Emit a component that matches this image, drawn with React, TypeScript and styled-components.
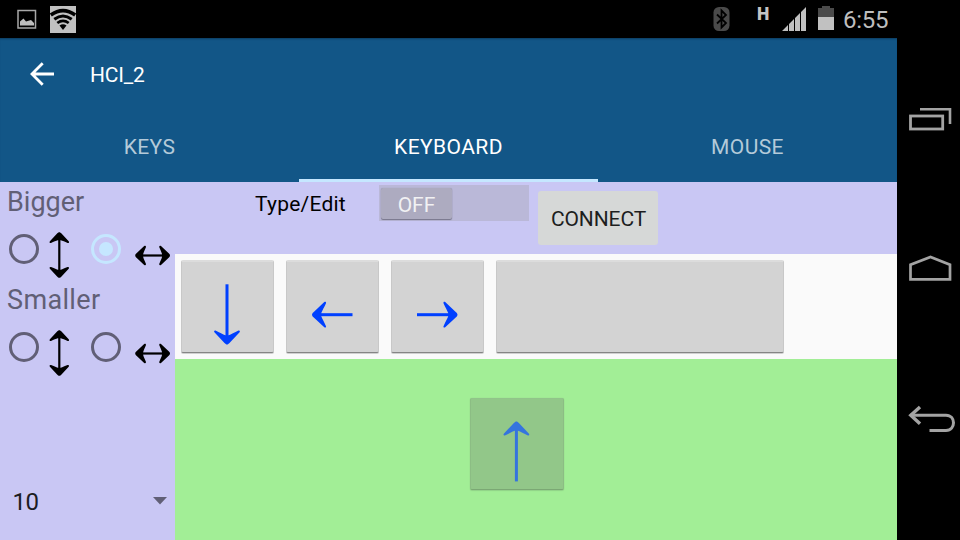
import React from 'react';
import styled, { createGlobalStyle, css } from 'styled-components';

const Global = createGlobalStyle`
  * { box-sizing: border-box; }
  body { margin: 0; background: #000; font-family: Roboto, sans-serif; }
  svg { display: block; flex: none; overflow: visible; }
  button { font: inherit; border: 0; padding: 0; margin: 0; }
`;

const Screen = styled.div`
  width: 960px; height: 540px; overflow: hidden;
  display: grid; grid-template: 38px 502px / 897px 63px;
  background: #000;
`;
const StatusBar = styled.header`
  grid-column: 1 / 3; display: flex; justify-content: space-between;
  padding: 0 71px 0 17px; color: #bebebe;
`;
const StatusGroup = styled.div`display: flex; align-items: flex-start;`;
const NetworkType = styled.span`
  width: 14px; margin: 6px 11px 0 27px; font-size: 17.5px; line-height: 16px; font-weight: 900; color: #c4c4c4;
`;
const Clock = styled.time`
  width: 46px; margin-left: 9px; font-size: 24px; line-height: 38px; height: 38px; padding-top: 1px; white-space: nowrap;
  letter-spacing: -0.3px;
`;
const StatusIcon = styled.svg<{ $top: number; $left?: number }>`
  margin-top: ${p => p.$top}px; margin-left: ${p => p.$left ?? 0}px;
`;

const AppWindow = styled.main`display: flex; flex-direction: column; background: #fafafa;`;
const AppBar = styled.div`
  height: 144px; flex: none; background: #125687; color: #fff;
  box-shadow: inset 0 2px 2px -1px #0d3e62;
`;
const Toolbar = styled.div`height: 72px; display: flex; align-items: center; padding-left: 30px;`;
const Title = styled.h1`
  margin: 1px 0 0 36px; font-size: 21px; line-height: 28px; font-weight: 400; letter-spacing: -0.2px;
`;
const Tabs = styled.nav`display: grid; grid-template-columns: repeat(3, 299px); height: 72px;`;
const Tab = styled.a<{ $active?: boolean }>`
  text-align: center; font-size: 21px; line-height: 75px; height: 72px; letter-spacing: 0.42px;
  color: ${p => (p.$active ? '#fff' : '#b4cad9')};
  border-bottom: 3px solid ${p => (p.$active ? '#c5e7ff' : 'transparent')};
`;

const Content = styled.div`flex: 1; display: grid; grid-template-columns: 175px 722px;`;
const Sidebar = styled.aside`background: #c9c7f4; display: flex; flex-direction: column;`;
const SizeGroup = styled.section`height: 98px;`;
const GroupTitle = styled.h2<{ $tracking: number }>`
  margin: 0; padding: 4px 0 0 7px; height: 50px; font-size: 27px; line-height: 32px; font-weight: 400; color: #615f76;
  letter-spacing: ${p => p.$tracking}px;
`;
const RadioRow = styled.div`display: flex; align-items: flex-start; padding-left: 9px;`;
const Radio = styled.span<{ $checked?: boolean; $gap?: number }>`
  width: 30px; height: 30px; flex: none; margin: 2px 0 0 ${p => p.$gap ?? 0}px; border-radius: 50%;
  border: 3px solid ${p => (p.$checked ? '#c5e7ff' : '#615f76')};
  display: grid; place-items: center;
  ${p => p.$checked && css`&::after { content: ''; width: 14px; height: 14px; border-radius: 50%; background: #c5e7ff; }`}
`;
const Spinner = styled.div`
  margin-top: auto; height: 78px; padding: 2px 8px 0 12.5px; display: flex; align-items: center;
  justify-content: space-between; font-size: 24px; letter-spacing: -0.4px; color: #1c1c22;
`;
const Caret = styled.svg`margin-top: -2px;`;

const Workspace = styled.div`display: grid; grid-template-rows: 72px 105px 181px;`;
const Controls = styled.div`background: #c9c7f4; display: flex; align-items: flex-start; padding-left: 80px;`;
const ToggleLabel = styled.span`width: 124px; font-size: 21px; line-height: 45px; letter-spacing: 0.22px; color: #000;`;
const Toggle = styled.button`width: 150px; height: 36px; margin-top: 3px; background: #bab8d8; padding: 3px 2px; display: flex;`;
const Thumb = styled.span`
  width: 71px; height: 31px; border-radius: 2px; background: #adabc0; color: #f1f1f3;
  font-size: 21px; line-height: 35px; text-align: center;
  box-shadow: 0 1px 1px #77758a, 0 0 1px #8f8da4;
`;
const Connect = styled.button`
  width: 120px; height: 54px; margin: 9px 0 0 9px; border-radius: 3px; background: #d6d8d7;
  font-size: 21px; line-height: 56px; letter-spacing: -0.1px; padding-left: 1px; color: #1d1e1e;
`;
const KeyRow = styled.div`background: #fafafa; display: flex; gap: 12px; padding: 6px;`;
const Canvas = styled.div`background: #a2ee96; padding: 38px 0 0 295px;`;
const Key = styled.button<{ $width?: number; $ghost?: boolean }>`
  display: block; width: ${p => p.$width ?? 93}px; height: 93px; border-radius: 2px;
  background: #d3d3d3; border: 1px solid #c8c8c8; border-top: 2px solid #dcdcdc; border-bottom: 1px solid #858585;
  box-shadow: 0 1px 0 #d0d0d0;
  ${p => p.$ghost && css`
    height: 92px; width: 94px;
    background: #92c789; border-color: #8cbd84; border-top-color: #91c48a; border-bottom-color: #7ba874;
    border-top-width: 1px; margin-top: 1px; box-shadow: 0 1px 1px #91d388, 0 0 1px #8cc482;
  `}
`;
const NavBar = styled.nav`display: flex; flex-direction: column; align-items: flex-start; padding: 69px 0 0 11px;`;
const NavIcon = styled.svg<{ $gap?: number }>`margin-top: ${p => p.$gap ?? 0}px; fill: none; stroke: #a3a3a3; stroke-width: 3;`;

type Dir = 'up' | 'down' | 'left' | 'right';
const turn: Record<Dir, number> = { up: 0, right: 90, down: 180, left: 270 };

/* Arrow inside a key face; (x, y) is the tip and the shaft trails behind it. */
const KeyArrow = ({ dir, x, y, length, color = '#0040ff' }: { dir: Dir; x: number; y: number; length: number; color?: string }) => (
  <svg width="91" height="89">
    <g transform={`translate(${x} ${y}) rotate(${turn[dir]})`} fill={color}>
      <rect x="-1.5" y="6" width="3" height={length - 6} />
      <path d="M0 0C.8 0 1.7.6 2.5 1.5L12.6 12.3C13.3 13.4 12.7 14.3 11.5 14C7.5 12.2 4 10.1 1.6 9.3H-1.6C-4 10.1-7.5 12.2-11.5 14C-12.7 14.3-13.3 13.4-12.6 12.3L-2.5 1.5C-1.7.6-.8 0 0 0Z" />
    </g>
  </svg>
);

const HEAD = 'M0 0C.8 0 1.5.6 2.2 1.3L9.4 9C10.2 10.2 9.5 11 8.3 10.7C5.5 9.6 3.2 8.4 1.5 8H-1.5C-3.2 8.4-5.5 9.6-8.3 10.7C-9.5 11-10.2 10.2-9.4 9L-2.2 1.3C-1.5.6-.8 0 0 0Z';

const VerticalArrow = styled(({ className }: { className?: string }) => (
  <svg className={className} width="20" height="46">
    <g transform="translate(10.3 .3)"><path d={HEAD} /><path d={HEAD} transform="translate(0 45.4) rotate(180)" /><rect x="-1.1" y="5" width="2.2" height="36" /></g>
  </svg>
))`margin-left: 10px;`;

const HorizontalArrow = styled(({ className }: { className?: string }) => (
  <svg className={className} width="36" height="20">
    <g transform="translate(.2 9.5) rotate(-90)"><path d={HEAD} /><path d={HEAD} transform="translate(0 34.8) rotate(180)" /><rect x="-1.1" y="5" width="2.2" height="25" /></g>
  </svg>
))`margin: 14px 0 0 14px;`;

const SizeOptions = ({ title, wide, tracking = 0 }: { title: string; wide?: boolean; tracking?: number }) => (
  <SizeGroup>
    <GroupTitle $tracking={tracking}>{title}</GroupTitle>
    <RadioRow>
      <Radio />
      <VerticalArrow />
      <Radio $gap={22} $checked={wide} />
      <HorizontalArrow />
    </RadioRow>
  </SizeGroup>
);

export default function App() {
  return (
    <>
      <Global />
      <Screen>
        <StatusBar>
          <StatusGroup>
            <StatusIcon $top={9} width="19" height="20">
              <rect x="1" y="1.5" width="17.5" height="17.5" fill="none" stroke="#a8a8a8" strokeWidth="1.5" />
              <path d="M3 16.5V12.5L6.5 9.5L9 12.5L14 11L17 14V16.5Z" fill="#bebebe" />
            </StatusIcon>
            <StatusIcon $top={6} $left={14} width="26" height="27">
              <rect width="26" height="27" fill="#c1c1c1" />
              <g fill="none" stroke="#000" strokeWidth="3.6">
                <path d="M.8 9Q13 .2 25.2 9" />
                <path d="M4.3 13.2Q13 6.8 21.7 13.2" strokeWidth="3" />
                <path d="M7.3 17Q13 12.8 18.7 17" strokeWidth="2.7" />
              </g>
              <path d="M9.5 19.5Q13 16.9 16.5 19.5L13 24Z" />
            </StatusIcon>
          </StatusGroup>
          <StatusGroup>
            <StatusIcon $top={7} width="17" height="24">
              <rect x=".5" width="16" height="24" rx="5.5" fill="#4a4a4a" />
              <path d="M4 7.5L13 16L8.5 20.5V3.5L13 8L4 16.5" fill="none" stroke="#000" strokeWidth="1.8" />
            </StatusIcon>
            <NetworkType>H</NetworkType>
            <StatusIcon $top={7} width="24" height="24">
              <path d="M0 24L6 18V24ZM7 24V17L12 12V24ZM13 24V11L18 6V24ZM19 24V5L24 0V24Z" fill="#c0c0c0" />
            </StatusIcon>
            <StatusIcon $top={6} $left={12} width="16" height="24">
              <path d="M0 2H4V0H12V2H16V11H0Z" fill="#4b4b4b" />
              <rect y="11" width="16" height="13" fill="#c1c1c1" />
            </StatusIcon>
            <Clock>6:55</Clock>
          </StatusGroup>
        </StatusBar>

        <AppWindow>
          <AppBar>
            <Toolbar>
              <svg width="24" height="24" fill="none" stroke="#fff" strokeWidth="2.8">
                <path d="M24 12H2.5M12.7 1.3L2 12L12.7 22.7" />
              </svg>
              <Title>HCI_2</Title>
            </Toolbar>
            <Tabs>
              <Tab>KEYS</Tab>
              <Tab $active>KEYBOARD</Tab>
              <Tab>MOUSE</Tab>
            </Tabs>
          </AppBar>
          <Content>
            <Sidebar>
              <SizeOptions title="Bigger" wide />
              <SizeOptions title="Smaller" tracking={0.35} />
              <Spinner>
                10
                <Caret width="14" height="8"><path d="M0 0H14L7 7.5Z" fill="#615f76" /></Caret>
              </Spinner>
            </Sidebar>
            <Workspace>
              <Controls>
                <ToggleLabel>Type/Edit</ToggleLabel>
                <Toggle><Thumb>OFF</Thumb></Toggle>
                <Connect>CONNECT</Connect>
              </Controls>
              <KeyRow>
                <Key><KeyArrow dir="down" x={45} y={81.6} length={60.3} /></Key>
                <Key><KeyArrow dir="left" x={25} y={51.7} length={40.5} /></Key>
                <Key><KeyArrow dir="right" x={65.5} y={51.7} length={40.5} /></Key>
                <Key $width={288} />
              </KeyRow>
              <Canvas>
                <Key $ghost><KeyArrow dir="up" x={45.4} y={21.4} length={60} color="#3574de" /></Key>
              </Canvas>
            </Workspace>
          </Content>
        </AppWindow>

        <NavBar>
          <NavIcon width="44" height="24">
            <rect x="2.5" y="9" width="32.2" height="13" strokeWidth="2.8" />
            <path d="M12 2.2H42V17" strokeWidth="2.6" />
          </NavIcon>
          <NavIcon $gap={124} width="44" height="27">
            <path d="M2.5 24.3V9.7L22.5 2L42 9.7V24.3Z" strokeWidth="2.7" />
          </NavIcon>
          <NavIcon $gap={123} width="48" height="30">
            <path d="M2 10.2H38C48 10.2 48 25.5 38 25.5H21.5" />
            <path d="M12 2L2.8 10.2L12 18.8" strokeWidth="3.4" />
          </NavIcon>
        </NavBar>
      </Screen>
    </>
  );
}
